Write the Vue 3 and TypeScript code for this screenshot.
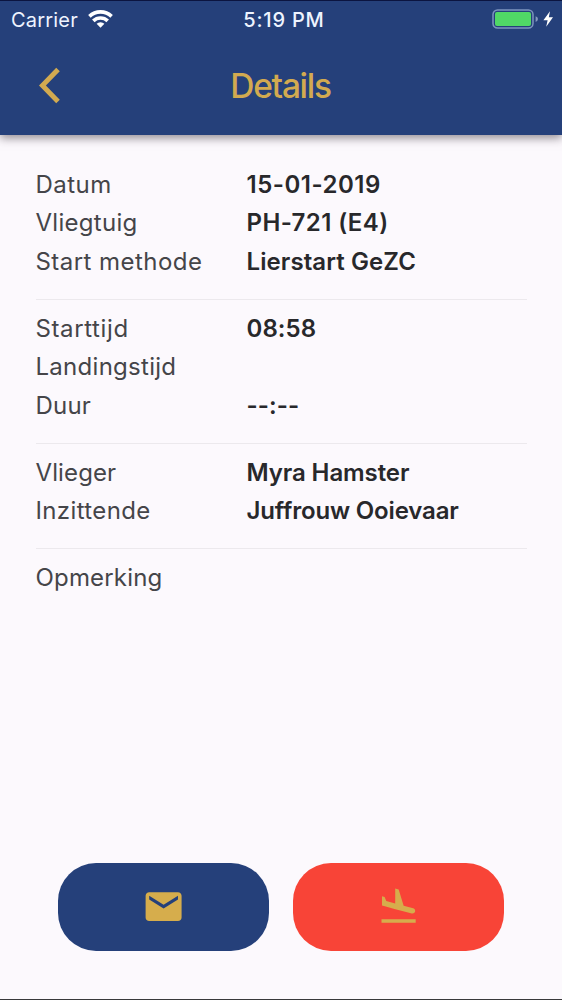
<script setup lang="ts">
interface Row {
  label: string
  value: string
  labelSpacing: number
  valueSpacing: number
}

const sections: Row[][] = [
  [
    { label: 'Datum', value: '15-01-2019', labelSpacing: 0.45, valueSpacing: 0.5 },
    { label: 'Vliegtuig', value: 'PH-721 (E4)', labelSpacing: 0.28, valueSpacing: 0.4 },
    { label: 'Start methode', value: 'Lierstart GeZC', labelSpacing: 0.45, valueSpacing: 0.08 },
  ],
  [
    { label: 'Starttijd', value: '08:58', labelSpacing: 0.62, valueSpacing: 0.05 },
    { label: 'Landingstijd', value: '', labelSpacing: 0.28, valueSpacing: 0 },
    { label: 'Duur', value: '--:--', labelSpacing: 0.2, valueSpacing: 0.1 },
  ],
  [
    { label: 'Vlieger', value: 'Myra Hamster', labelSpacing: 0.12, valueSpacing: -0.1 },
    { label: 'Inzittende', value: 'Juffrouw Ooievaar', labelSpacing: 0.37, valueSpacing: -0.16 },
  ],
  [{ label: 'Opmerking', value: '', labelSpacing: 0.18, valueSpacing: 0 }],
]
</script>

<template>
  <div class="screen">
    <header class="header">
      <div class="status">
        <div class="status-left">
          <span class="carrier">Carrier</span>
          <svg class="wifi" viewBox="0 0 25 18" width="25" height="18">
            <path d="M1.4 6.4A16 16 0 0 1 23.6 6.4" />
            <path d="M5.3 10.9A10.3 10.3 0 0 1 19.7 10.9" />
            <path class="dot" d="M12.5 17.7L8.6 13.8A5.5 5.5 0 0 1 16.4 13.8Z" />
          </svg>
        </div>
        <span class="time">5:19 PM</span>
        <div class="status-right">
          <svg viewBox="0 0 62 20" width="62" height="20">
            <rect x="1" y="1" width="40" height="18" rx="4.5" fill="none" stroke="#7d94bf" stroke-width="1.5" />
            <rect x="3" y="3" width="36" height="14" rx="2" fill="#50d866" />
            <path d="M43.6 7.2Q46 8 46 10T43.6 13Z" fill="#8599bf" />
            <path d="M58 2.2L51.4 11.2H55.6L54.2 17.8L61 8.3H56.8Z" fill="#fff" />
          </svg>
        </div>
      </div>
      <div class="navbar">
        <svg class="back" viewBox="0 0 43 43" width="43" height="43">
          <path d="M19 5.6L3.4 21.5L19 37.4" />
        </svg>
        <h1 class="title">Details</h1>
      </div>
    </header>

    <main class="details">
      <section v-for="(rows, i) in sections" :key="i" class="section">
        <div v-for="row in rows" :key="row.label" class="row">
          <span class="label" :style="{ letterSpacing: row.labelSpacing + 'px' }">{{ row.label }}</span>
          <span class="value" :style="{ letterSpacing: row.valueSpacing + 'px' }">{{ row.value }}</span>
        </div>
      </section>
    </main>

    <footer class="actions">
      <button class="action mail" aria-label="E-mail">
        <svg viewBox="0 0 24 24" width="43.2" height="43.2">
          <path d="M20 4H4c-1.1 0-1.99.9-1.99 2L2 18c0 1.1.9 2 2 2h16c1.1 0 2-.9 2-2V6c0-1.1-.9-2-2-2zm0 4l-8 5-8-5V6l8 5 8-5v2z" />
        </svg>
      </button>
      <button class="action land" aria-label="Landing">
        <svg viewBox="0 0 24 24" width="43.2" height="43.2">
          <path d="M2.5 19h19v2h-19zM9.68 13.27l4.35 1.16 5.31 1.42c.8.21 1.62-.26 1.84-1.06.21-.8-.26-1.62-1.06-1.84l-5.31-1.42-2.76-9.02L10.12 2v8.28L5.15 8.95l-.93-2.32-1.45-.39v5.17l1.6.43 5.31 1.43z" />
        </svg>
      </button>
    </footer>
  </div>
</template>

<style>
body {
  margin: 0;
}
</style>

<style scoped>
.screen {
  box-sizing: border-box;
  width: 562px;
  height: 1000px;
  display: flex;
  flex-direction: column;
  overflow: hidden;
  background: #fcf9fd;
  border-bottom: 1px solid #39393b;
  font-family: Inter, Roboto, sans-serif;
}
.header {
  box-sizing: border-box;
  flex: none;
  height: 134.5px;
  background: #25407a;
  border-top: 1px solid #0b1440;
  box-shadow: 0 3px 9px rgba(40, 30, 40, 0.5);
}
.status {
  display: grid;
  grid-template-columns: 1fr auto 1fr;
  align-items: center;
  height: 36px;
  padding: 0 8px 0 11px;
  color: #eef4ff;
  font-size: 20px;
}
.status-left {
  display: flex;
  align-items: center;
  gap: 10px;
}
.carrier {
  padding-top: 1px;
  letter-spacing: 0.2px;
}
.wifi {
  fill: none;
  stroke: #fff;
  stroke-width: 3.6;
}
.wifi .dot {
  fill: #fff;
  stroke: none;
}
.time {
  padding: 1px 0 0 3px;
  font-weight: 550;
  letter-spacing: 0.8px;
}
.status-right {
  display: flex;
  justify-content: flex-end;
}
.navbar {
  display: grid;
  grid-template-columns: 1fr auto 1fr;
  align-items: center;
  height: 96px;
  padding: 0 40px 0 39px;
}
.back {
  fill: none;
  stroke: #d2aa50;
  stroke-width: 5;
  stroke-linejoin: miter;
}
.title {
  margin: 0;
  padding-top: 2px;
  color: #d2aa50;
  font-size: 33.5px;
  font-weight: 500;
  letter-spacing: -1.3px;
}
.details {
  flex: 1;
  padding: 31.1px 35px 0 36px;
}
.section + .section {
  margin-top: 17.2px;
  padding-top: 9.8px;
  border-top: 1px solid #ece9ed;
}
.row {
  display: grid;
  grid-template-columns: 211px 1fr;
  height: 38.7px;
  line-height: 38.7px;
  font-size: 24px;
  white-space: nowrap;
}
.label {
  margin-left: -0.5px;
  color: #454549;
  font-weight: 400;
}
.value {
  margin-left: -0.5px;
  color: #28282b;
  font-weight: 600;
}
.actions {
  display: flex;
  gap: 23.6px;
  padding: 0 58.4px 48px;
}
.action {
  display: flex;
  align-items: center;
  justify-content: center;
  width: 210.8px;
  height: 88px;
  padding: 0;
  border: 0;
  border-radius: 38px;
  fill: #d6ad4c;
}
.mail {
  background: #25407a;
}
.land {
  background: #f84437;
}
</style>
